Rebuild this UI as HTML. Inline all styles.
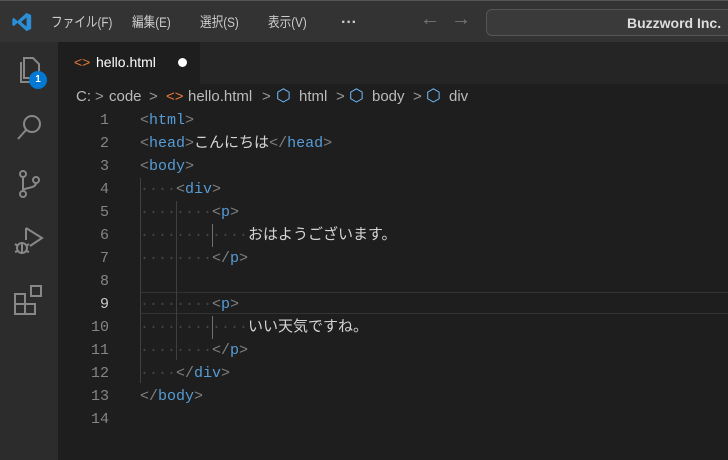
<!DOCTYPE html>
<html><head><meta charset="utf-8"><style>
*{margin:0;padding:0;box-sizing:border-box}
body{width:728px;height:460px;background:#1e1e1e;position:relative;overflow:hidden;font-family:"Liberation Sans","Noto Sans CJK JP",sans-serif}
.title{position:absolute;left:0;top:0;width:728px;height:42px;background:#333;border-top:1px solid #555}
.menu{position:absolute;top:11px;color:#ccc;font-size:14px;transform:scaleX(0.83);transform-origin:left}
.search{position:absolute;left:486px;top:8px;width:260px;height:27px;border:1px solid #555;border-radius:6px;background:#3a3a3a;color:#ddd;font-size:14px;font-weight:bold;padding:5px 0 0 140px}
.act{position:absolute;left:0;top:42px;width:58px;height:418px;background:#2c2c2c}
.tabs{position:absolute;left:58px;top:42px;width:670px;height:42px;background:#252526}
.tab{position:absolute;left:0;top:0;width:142px;height:42px;background:#1e1e1e;color:#fff;font-size:14px;padding:12px 0 0 38px}
.bc span{position:absolute;top:88px;color:#bbb;font-size:15px;white-space:pre}
.bc .s{color:#999}.bc .h{color:#75beff;top:86px;font-size:17px}
.code{position:absolute;left:0;top:109px;font-family:"Liberation Mono","Noto Sans CJK JP",monospace;font-size:15px;line-height:23px;white-space:pre}
.ln{position:absolute;left:60px;width:49px;text-align:right;color:#858585}
.tx{position:absolute;left:140px;color:#d4d4d4}
.b{color:#808080}.t{color:#569cd6}.d{color:#444}
.g{position:absolute;width:1px;background:#404040}
</style></head><body>
<div class="title">
<svg style="position:absolute;left:11px;top:10px" width="22" height="22" viewBox="0 0 24 24"><path d="M17 2 L22 4.5 V19.5 L17 22 L7 13 L3 16.5 L1.5 15.5 V8.5 L3 7.5 L7 11 Z M17 7 L11 12 L17 17 Z" fill="#2a8fd8"/></svg>
<span class="menu" style="left:51px">ファイル(F)</span>
<span class="menu" style="left:132px">編集(E)</span>
<span class="menu" style="left:200px">選択(S)</span>
<span class="menu" style="left:268px">表示(V)</span>
<span class="menu" style="left:341px;top:13px;font-size:16px;font-weight:bold;transform:none">···</span>
<span class="menu" style="left:420px;top:7px;font-size:20px;color:#777;transform:none">←</span>
<span class="menu" style="left:451px;top:7px;font-size:20px;color:#777;transform:none">→</span>
<div class="search">Buzzword Inc.</div>
</div>
<div class="act">
<svg style="position:absolute;left:14px;top:12px" width="30" height="30" viewBox="0 0 30 30" fill="none" stroke="#888" stroke-width="2"><path d="M10 4h9l6 6v14H10z M7 8v20h14"/></svg>
<div style="position:absolute;left:29px;top:29px;width:18px;height:18px;border-radius:50%;background:#0078d4;color:#fff;font-size:10px;font-weight:bold;text-align:center;line-height:18px">1</div>
<svg style="position:absolute;left:14px;top:70px" width="30" height="30" viewBox="0 0 30 30" fill="none" stroke="#888" stroke-width="2"><circle cx="18" cy="12" r="8"/><path d="M12 18L4 27"/></svg>
<svg style="position:absolute;left:14px;top:126px" width="30" height="32" viewBox="0 0 30 32" fill="none" stroke="#888" stroke-width="2"><circle cx="9" cy="6" r="3"/><circle cx="9" cy="26" r="3"/><circle cx="22" cy="12" r="3"/><path d="M9 9v14M22 15c0 6-13 4-13 8"/></svg>
<svg style="position:absolute;left:12px;top:182px" width="34" height="34" viewBox="0 0 34 34" fill="none" stroke="#888" stroke-width="2"><path d="M14 4v12M14 4l16 10-12 8"/><circle cx="10" cy="24" r="5"/><path d="M3 20l3 2M3 28l3-1M17 20l-3 2M17 28l-3-1M10 19v10"/></svg>
<svg style="position:absolute;left:13px;top:242px" width="32" height="32" viewBox="0 0 32 32" fill="none" stroke="#888" stroke-width="2"><path d="M2 10h10v10H2zM2 20h10v10H2zM12 20h10v10H12zM18 2h10v10H18z"/></svg>
</div>
<div class="tabs"><div class="tab"><span style="position:absolute;left:16px;top:12px;color:#e37933">&lt;&gt;</span>hello.html<span style="position:absolute;left:120px;top:16px;width:9px;height:9px;border-radius:50%;background:#fff"></span></div></div>
<div class="bc">
<span style="left:76px">C:</span><span class="s" style="left:95px">&gt;</span>
<span style="left:109px">code</span><span class="s" style="left:149px">&gt;</span>
<span style="left:166px;color:#e37933">&lt;&gt;</span><span style="left:188px">hello.html</span><span class="s" style="left:262px">&gt;</span>
<span class="h" style="left:276px">⬡</span><span style="left:299px">html</span><span class="s" style="left:336px">&gt;</span>
<span class="h" style="left:349px">⬡</span><span style="left:372px">body</span><span class="s" style="left:413px">&gt;</span>
<span class="h" style="left:426px">⬡</span><span style="left:449px">div</span>
</div>
<div style="position:absolute;left:140px;top:292px;width:588px;height:22px;border-top:1px solid #333;border-bottom:1px solid #333"></div>
<div class="g" style="left:140px;top:178px;height:205px"></div>
<div class="g" style="left:176px;top:201px;height:159px"></div>
<div class="g" style="left:212px;top:224px;height:23px;background:#707070"></div>
<div class="g" style="left:212px;top:316px;height:23px;background:#707070"></div>
<div class="code">
<div class="ln" style="top:0">1</div><div class="tx" style="top:0"><span class="b">&lt;</span><span class="t">html</span><span class="b">&gt;</span></div>
<div class="ln" style="top:23px">2</div><div class="tx" style="top:23px"><span class="b">&lt;</span><span class="t">head</span><span class="b">&gt;</span>こんにちは<span class="b">&lt;/</span><span class="t">head</span><span class="b">&gt;</span></div>
<div class="ln" style="top:46px">3</div><div class="tx" style="top:46px"><span class="b">&lt;</span><span class="t">body</span><span class="b">&gt;</span></div>
<div class="ln" style="top:69px">4</div><div class="tx" style="top:69px"><span class="d">····</span><span class="b">&lt;</span><span class="t">div</span><span class="b">&gt;</span></div>
<div class="ln" style="top:92px">5</div><div class="tx" style="top:92px"><span class="d">········</span><span class="b">&lt;</span><span class="t">p</span><span class="b">&gt;</span></div>
<div class="ln" style="top:115px">6</div><div class="tx" style="top:115px"><span class="d">············</span>おはようございます。</div>
<div class="ln" style="top:138px">7</div><div class="tx" style="top:138px"><span class="d">········</span><span class="b">&lt;/</span><span class="t">p</span><span class="b">&gt;</span></div>
<div class="ln" style="top:161px">8</div>
<div class="ln" style="top:184px;color:#ccc">9</div><div class="tx" style="top:184px"><span class="d">········</span><span class="b">&lt;</span><span class="t">p</span><span class="b">&gt;</span></div>
<div class="ln" style="top:207px">10</div><div class="tx" style="top:207px"><span class="d">············</span>いい天気ですね。</div>
<div class="ln" style="top:230px">11</div><div class="tx" style="top:230px"><span class="d">········</span><span class="b">&lt;/</span><span class="t">p</span><span class="b">&gt;</span></div>
<div class="ln" style="top:253px">12</div><div class="tx" style="top:253px"><span class="d">····</span><span class="b">&lt;/</span><span class="t">div</span><span class="b">&gt;</span></div>
<div class="ln" style="top:276px">13</div><div class="tx" style="top:276px"><span class="b">&lt;/</span><span class="t">body</span><span class="b">&gt;</span></div>
<div class="ln" style="top:299px">14</div>
</div>
</body></html>
